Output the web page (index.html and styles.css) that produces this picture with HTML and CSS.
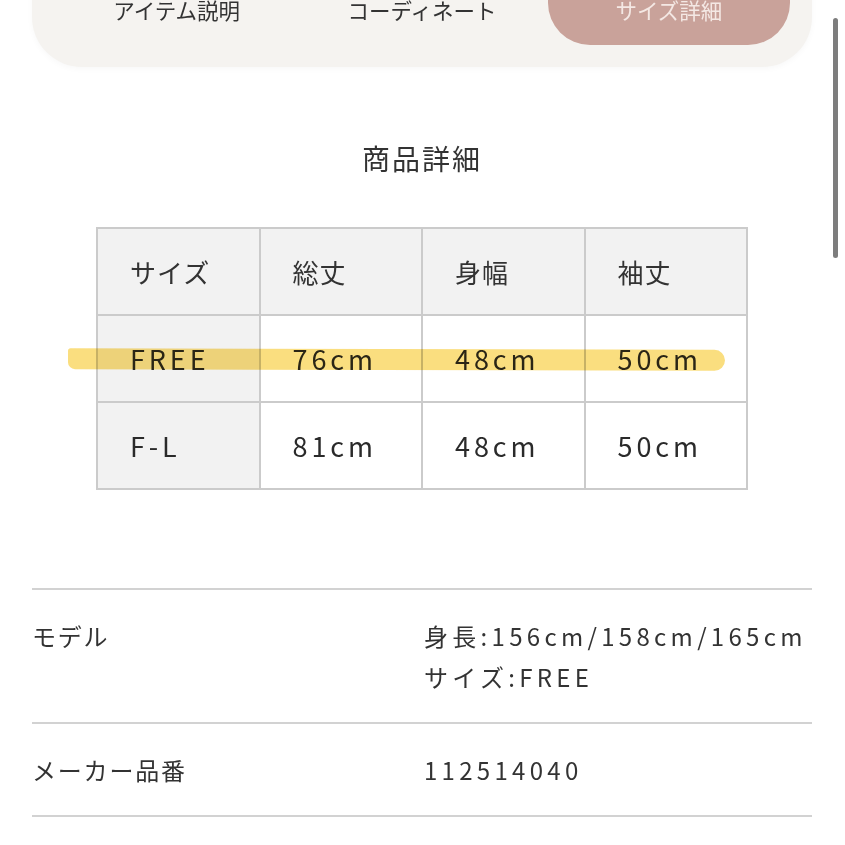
FILE: index.html
```html
<!DOCTYPE html>
<html lang="ja">
<head>
<meta charset="utf-8">
<title>商品詳細</title>
<link rel="stylesheet" href="styles.css">
</head>
<body>
<div class="page">
  <header class="tabs-panel">
    <nav class="tabs">
      <div class="tab">アイテム説明</div>
      <div class="tab">コーディネート</div>
      <div class="tab active">サイズ詳細</div>
    </nav>
  </header>

  <h2 class="title">商品詳細</h2>

  <div class="size-wrap">
    <div class="size-table">
      <div class="cell head">サイズ</div>
      <div class="cell head">総丈</div>
      <div class="cell head">身幅</div>
      <div class="cell head">袖丈</div>

      <div class="cell side num">FREE</div>
      <div class="cell num">76cm</div>
      <div class="cell num">48cm</div>
      <div class="cell num">50cm</div>

      <div class="cell side num">F-L</div>
      <div class="cell num">81cm</div>
      <div class="cell num">48cm</div>
      <div class="cell num">50cm</div>
    </div>
    <div class="highlight"></div>
  </div>

  <dl class="spec">
    <div class="spec-row">
      <dt>モデル</dt>
      <dd>身長:156cm/158cm/165cm<br>サイズ:FREE</dd>
    </div>
    <div class="spec-row">
      <dt>メーカー品番</dt>
      <dd>112514040</dd>
    </div>
  </dl>
</div>
<div class="scrollbar"></div>
</body>
</html>
```
FILE: styles.css
```css
html, body {
  margin: 0;
  padding: 0;
  background: #ffffff;
  overflow: hidden;
}

body {
  font-family: "Noto Sans CJK JP", "Noto Sans", sans-serif;
  color: #333333;
}

.page {
  padding: 0 33px 0 32px;
}

/* tabs */
.tabs-panel {
  margin-top: -26px;
  background: #f5f3f0;
  border-radius: 0 0 50px 50px;
  padding: 0 22px 22px;
  box-shadow: 0 2px 6px rgba(0, 0, 0, 0.03);
}

.tabs {
  display: grid;
  grid-template-columns: repeat(3, 1fr);
  height: 71px;
}

.tab {
  display: flex;
  align-items: center;
  justify-content: center;
  font-size: 21.5px;
  color: #333333;
}

.tab.active {
  margin-left: 3px;
  background: #c9a29a;
  color: #f4e8e4;
  border-radius: 0 0 42px 42px;
}

/* title */
.title {
  margin: 73px 0 0;
  font-size: 28px;
  line-height: 36px;
  font-weight: 400;
  letter-spacing: 2px;
  text-align: center;
  color: #333333;
}

/* size table */
.size-wrap {
  position: relative;
  width: 652px;
  margin: 51px auto 0;
}

.size-table {
  display: grid;
  grid-template-columns: repeat(4, 1fr);
  grid-auto-rows: 85px;
  gap: 2px;
  padding: 2px;
  background: #cbcbcb;
}

.cell {
  display: flex;
  align-items: center;
  padding-left: 32px;
  background: #ffffff;
  font-size: 26px;
  letter-spacing: 1px;
  color: #333333;
}

.cell.head,
.cell.side {
  background: #f2f2f2;
}

.cell.num {
  font-size: 27px;
  letter-spacing: 3.9px;
  color: #2a2a2a;
}

.highlight {
  position: absolute;
  left: -28px;
  top: 122px;
  width: 657px;
  height: 21px;
  background: rgba(247, 206, 66, 0.68);
  border-radius: 3px 12px 12px 8px;
  transform: rotate(0.15deg);
  mix-blend-mode: multiply;
  pointer-events: none;
}

/* spec list */
.spec {
  margin: 98px 0 0;
  border-top: 2px solid #d2d2d2;
}

.spec-row {
  display: grid;
  grid-template-columns: 392px 1fr;
  padding: 25px 0;
  border-bottom: 2px solid #d2d2d2;
  font-size: 24px;
  line-height: 41px;
}

.spec dt {
  letter-spacing: 1.8px;
}

.spec dd {
  margin: 0;
  letter-spacing: 4.3px;
}

/* scrollbar overlay */
.scrollbar {
  position: fixed;
  left: 833px;
  top: 18px;
  width: 5px;
  height: 240px;
  border-radius: 3px;
  background: #7d7d7d;
}
```
